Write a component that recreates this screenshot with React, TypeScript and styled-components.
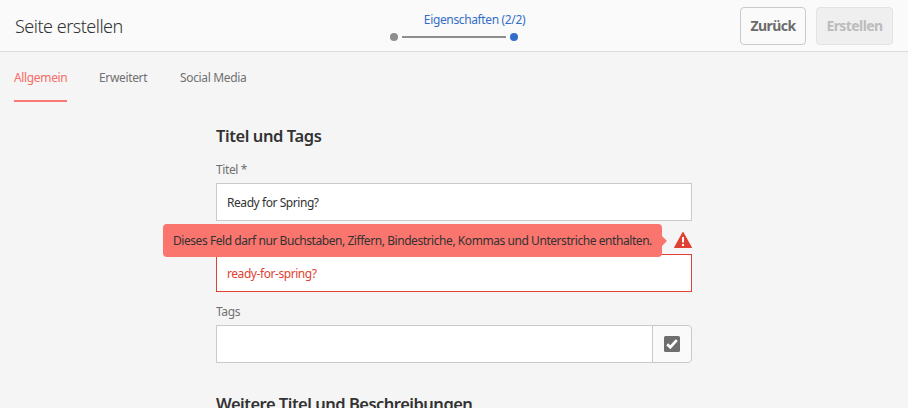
import React from "react";
import styled, { createGlobalStyle } from "styled-components";

const GlobalStyle = createGlobalStyle`
  * { box-sizing: border-box; }
  html, body { margin: 0; background: #f5f5f5; overflow: hidden; }
  body, button, input {
    font-family: "Noto Sans", "Open Sans", sans-serif;
    font-size: 12px;
    line-height: 18px;
  }
`;

const Page = styled.div`
  height: 408px;
  overflow: hidden;
  background: #f5f5f5;
  color: #707070;
`;

const Header = styled.header`
  height: 52px;
  display: grid;
  grid-template-columns: 1fr 202px 1fr;
  padding: 0 15px;
  background: #fafafa;
  border-bottom: 1px solid #dcdcdc;
`;

const PageTitle = styled.h1`
  margin: 0;
  padding-top: 14px;
  font-size: 18px;
  line-height: 24px;
  font-weight: 300;
  letter-spacing: -0.5px;
  color: #323232;
`;

const Wizard = styled.div`
  display: flex;
  flex-direction: column;
  align-items: center;
  padding-top: 11px;
  margin-left: 41px;
`;

const StepLabel = styled.div`
  white-space: nowrap;
  letter-spacing: -0.36px;
  color: #326ec8;
`;

const StepTrack = styled.div`
  display: flex;
  align-items: center;
  gap: 4px;
  width: 128px;
  margin-top: 4px;
  margin-left: -41px;
`;

const StepDot = styled.span<{ $active?: boolean }>`
  flex: none;
  width: 8px;
  height: 8px;
  border-radius: 50%;
  background: ${(p) => (p.$active ? "#326ec8" : "#8e8e8e")};
`;

const StepLine = styled.span`
  flex: 1;
  height: 2px;
  background: #8e8e8e;
`;

const Actions = styled.div`
  display: flex;
  justify-content: flex-end;
  gap: 10px;
  padding-top: 7px;
`;

const Button = styled.button<{ $width: number }>`
  width: ${(p) => p.$width}px;
  height: 38px;
  padding: 0;
  border: 1px solid #cacaca;
  border-radius: 4px;
  background: #fafafa;
  color: #6b6b6b;
  font-size: 14px;
  font-weight: 700;
  letter-spacing: -0.58px;
  &:disabled {
    border-color: #e3e3e3;
    background: #efefef;
    color: #bcbcbc;
  }
`;

const Tabs = styled.nav`
  display: flex;
  gap: 32px;
  height: 50px;
  padding: 17px 14px 0;
`;

const Tab = styled.a<{ $selected?: boolean; $width: number }>`
  width: ${(p) => p.$width}px;
  height: 33px;
  white-space: nowrap;
  letter-spacing: -0.35px;
  color: ${(p) => (p.$selected ? "#f96b65" : "#707070")};
  border-bottom: 2px solid ${(p) => (p.$selected ? "#fa7a73" : "transparent")};
`;

const Form = styled.main`
  width: 476px;
  margin-left: 216px;
  padding-top: 22px;
`;

const SectionTitle = styled.h2<{ $spacing: number }>`
  margin: 0;
  font-size: 16.5px;
  line-height: 24px;
  font-weight: 600;
  letter-spacing: ${(p) => p.$spacing}px;
  color: #323232;
`;

const Label = styled.label`
  display: block;
  height: 22px;
  letter-spacing: -0.38px;
`;

const Field = styled.input<{ $invalid?: boolean }>`
  display: block;
  width: 100%;
  height: 38px;
  padding: 0 10px;
  border: 1px solid ${(p) => (p.$invalid ? "#e14132" : "#cacaca")};
  border-radius: 0;
  outline: none;
  background: #fff;
  letter-spacing: -0.44px;
  color: ${(p) => (p.$invalid ? "#e14132" : "#323232")};
`;

const TitleGroup = styled.div`
  padding-top: 13px;
`;

const NameGroup = styled.div`
  position: relative;
  padding-top: 33px;
`;

const TagsGroup = styled.div`
  padding-top: 11px;
`;

const Tooltip = styled.div`
  position: absolute;
  top: 3px;
  right: 30px;
  width: 499px;
  height: 33px;
  padding: 8px 10px;
  border-radius: 4px;
  background: #f9756e;
  color: #323232;
  letter-spacing: -0.44px;
  white-space: nowrap;
  &::after {
    content: "";
    position: absolute;
    left: 100%;
    top: 12px;
    border: 5px solid transparent;
    border-left-color: #f9756e;
    border-right-width: 0;
  }
`;

const AlertIcon = styled.svg`
  position: absolute;
  top: 11px;
  right: 0;
`;

const TagPicker = styled.div`
  display: flex;
  height: 38px;
`;

const PickButton = styled.button`
  flex: none;
  display: flex;
  align-items: center;
  justify-content: center;
  width: 40px;
  margin-left: -1px;
  padding: 0;
  border: 1px solid #cacaca;
  border-radius: 0 4px 4px 0;
  background: #fafafa;
`;

const NextSection = styled.div`
  padding-top: 29px;
`;

export default function App() {
  return (
    <>
      <GlobalStyle />
      <Page>
        <Header>
          <PageTitle>Seite erstellen</PageTitle>
          <Wizard>
            <StepLabel>Eigenschaften (2/2)</StepLabel>
            <StepTrack>
              <StepDot />
              <StepLine />
              <StepDot $active />
            </StepTrack>
          </Wizard>
          <Actions>
            <Button $width={66}>Zurück</Button>
            <Button $width={77} disabled>Erstellen</Button>
          </Actions>
        </Header>
        <Tabs>
          <Tab $selected $width={53}>Allgemein</Tab>
          <Tab $width={49}>Erweitert</Tab>
          <Tab $width={68}>Social Media</Tab>
        </Tabs>
        <Form>
          <SectionTitle $spacing={-0.42}>Titel und Tags</SectionTitle>
          <TitleGroup>
            <Label htmlFor="title">Titel *</Label>
            <Field id="title" defaultValue="Ready for Spring?" />
          </TitleGroup>
          <NameGroup>
            <Tooltip role="alert">
              Dieses Feld darf nur Buchstaben, Ziffern, Bindestriche, Kommas und Unterstriche enthalten.
            </Tooltip>
            <AlertIcon width="18" height="16" viewBox="0 0 18 16">
              <path d="M9 0 L9.7 0.5 L18 15.4 L17.6 16 H0.4 L0 15.4 L8.3 0.5Z" fill="#e14132" />
              <path d="M8 5h2v5.6H8zM8 12h2v2H8z" fill="#fff" />
            </AlertIcon>
            <Field $invalid defaultValue="ready-for-spring?" aria-label="Name" />
          </NameGroup>
          <TagsGroup>
            <Label htmlFor="tags">Tags</Label>
            <TagPicker>
              <Field id="tags" />
              <PickButton aria-label="Tags auswählen">
                <svg width="16" height="16" viewBox="0 0 16 16">
                  <rect width="16" height="16" rx="1.5" fill="#6e6e6e" />
                  <path d="M3.2 8.2 L6.3 11.2 L12.8 4.2" fill="none" stroke="#fff" strokeWidth="2.7" />
                </svg>
              </PickButton>
            </TagPicker>
          </TagsGroup>
          <NextSection>
            <SectionTitle $spacing={-0.5}>Weitere Titel und Beschreibungen</SectionTitle>
          </NextSection>
        </Form>
      </Page>
    </>
  );
}
